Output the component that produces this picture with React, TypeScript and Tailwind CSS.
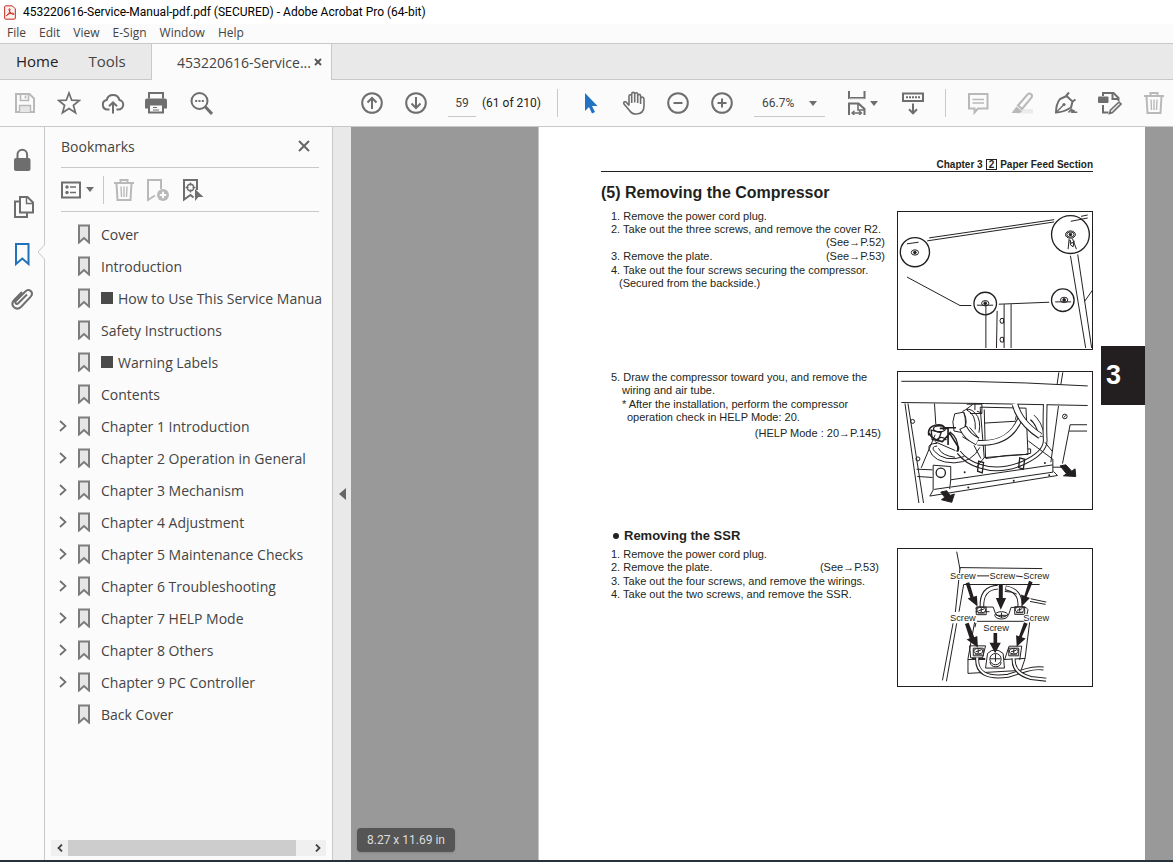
import type { ReactNode } from "react";

type IconProps = {
  children: ReactNode;
  className?: string;
};

function Icon({ children, className = "size-6 text-[#6e6e6e]" }: IconProps) {
  return (
    <svg
      viewBox="0 0 24 24"
      fill="none"
      stroke="currentColor"
      strokeWidth="2"
      className={className}
      aria-hidden="true"
    >
      {children}
    </svg>
  );
}

function ToolButton({ label, children }: { label: string; children: ReactNode }) {
  return (
    <button type="button" aria-label={label} className="flex h-11 w-11 shrink-0 items-center justify-center">
      {children}
    </button>
  );
}

function Caret() {
  return (
    <svg viewBox="0 0 8 5" className="h-[5px] w-2 text-[#6e6e6e]" aria-hidden="true">
      <path d="M0 0h8L4 5z" fill="currentColor" />
    </svg>
  );
}

function TrashIcon() {
  return (
    <Icon className="size-6 text-[#b9b9b9]">
      <path d="M2 5h20M8.500 4.500V2h7v2.500M4.500 5.500l1 16.500h13l1-16.500" />
      <path d="M9 8.500l.5 10.500M12 8.500V19M15 8.500L14.500 19" strokeWidth="1.4" />
    </Icon>
  );
}

const menus = ["File", "Edit", "View", "E-Sign", "Window", "Help"];

const bookmarks = [
  { title: "Cover" },
  { title: "Introduction" },
  { title: "How to Use This Service Manua", marked: true },
  { title: "Safety Instructions" },
  { title: "Warning Labels", marked: true },
  { title: "Contents" },
  { title: "Chapter 1 Introduction", expandable: true },
  { title: "Chapter 2 Operation in General", expandable: true },
  { title: "Chapter 3 Mechanism", expandable: true },
  { title: "Chapter 4 Adjustment", expandable: true },
  { title: "Chapter 5 Maintenance Checks", expandable: true },
  { title: "Chapter 6 Troubleshooting", expandable: true },
  { title: "Chapter 7 HELP Mode", expandable: true },
  { title: "Chapter 8 Others", expandable: true },
  { title: "Chapter 9 PC Controller", expandable: true },
  { title: "Back Cover" },
];

function TitleBar() {
  return (
    <header className="bg-white">
      <div className="flex h-6 items-center gap-[7px] pl-1 text-[12px] text-black">
        <svg viewBox="0 0 36 44" className="h-[15px] w-3 shrink-0" aria-hidden="true">
          <path d="M2 5q0-3 3-3h20l9 9v28q0 3-3 3H5q-3 0-3-3z" fill="#fdf1ef" stroke="#c5281c" strokeWidth="3" />
          <path
            d="M8 31c5-2 9-9 10-18 0-4-4-3-3 1 2 8 8 13 13 14 4 0 3-4-2-4-6 0-12 2-16 5-3 2-4 4-2 2z"
            fill="none"
            stroke="#c5281c"
            strokeWidth="3"
          />
        </svg>
        <h1 className="font-['Roboto',sans-serif]">
          453220616-Service-Manual-pdf.pdf (SECURED) - Adobe Acrobat Pro (64-bit)
        </h1>
      </div>
      <nav className="flex h-5 items-center gap-[13px] border-b border-[#c8c8c8] bg-[#fbfbfb] pb-[2px] pl-[7px] text-[12px] text-[#444]">
        {menus.map((menu) => (
          <button key={menu} type="button">
            {menu}
          </button>
        ))}
      </nav>
    </header>
  );
}

function TabBar() {
  return (
    <nav className="flex h-9 bg-[#e9e9e9] text-[14px] text-[#444]">
      <div className="flex w-[152px] items-center gap-[30px] border-r border-b border-[#c8c8c8] pl-4 text-[15px]">
        <button type="button" className="text-[#222]">
          Home
        </button>
        <button type="button">Tools</button>
      </div>
      <div className="flex w-[179px] items-center justify-between bg-[#fbfbfb] pr-[9px] pl-[25px]">
        <button type="button">453220616-Service...</button>
        <button type="button" aria-label="Close tab">
          <svg viewBox="0 0 8 8" className="size-2 text-[#555]" aria-hidden="true">
            <path d="M1 1l6 6M7 1L1 7" stroke="currentColor" strokeWidth="1.800" />
          </svg>
        </button>
      </div>
      <div className="flex-1 border-b border-l border-[#c8c8c8]" />
    </nav>
  );
}

function Toolbar() {
  return (
    <div className="flex h-[47px] items-center overflow-hidden border-b border-[#c8c8c8] bg-[#fbfbfb] pl-[3px]">
      <ToolButton label="Save">
        <Icon className="size-6 text-[#b9b9b9]">
          <path d="M3 3h13.500L21 7.500V21H3z" />
          <path d="M7.500 3v6.500h8V3M12.500 4.500v3" strokeWidth="1.6" />
          <path d="M6.500 21v-6.500h11V21" strokeWidth="1.4" fill="#e6e6e6" />
        </Icon>
      </ToolButton>
      <ToolButton label="Star">
        <Icon>
          <path d="M12 2l2.700 7.200 7.700.3-6 4.800 2.100 7.400-6.500-4.200-6.500 4.200 2.100-7.400-6-4.800 7.700-.3z" strokeWidth="1.700" />
        </Icon>
      </ToolButton>
      <ToolButton label="Upload">
        <Icon>
          <path d="M8.500 18.500H6.500a4.800 4.800 0 0 1-.8-9.500 6.500 6.500 0 0 1 12.700 0 4.800 4.800 0 0 1-.9 9.500h-2" />
          <path d="M12 22.500V11.500M8 15.300l4-4 4 4" />
        </Icon>
      </ToolButton>
      <ToolButton label="Print">
        <Icon>
          <path d="M4 7.500V2h14v5.500" />
          <path d="M2 7.500h18q2 0 2 2v8h-4v-3H4v3H0v-8q0-2 2-2z" fill="currentColor" stroke="none" />
          <path d="M4 13.500h14V21.500H4z" fill="#fbfbfb" />
          <path d="M8 16.500h4M8 19h6" strokeWidth="1.200" />
        </Icon>
      </ToolButton>
      <ToolButton label="Find">
        <Icon>
          <circle cx="10.500" cy="10" r="8" />
          <path d="M16 15.500l7 7.500" strokeWidth="3" />
          <path d="M6.200 10h2M9.500 10h2M12.800 10h2" />
        </Icon>
      </ToolButton>

      <div className="w-[127px] shrink-0" />
      <ToolButton label="Previous page">
        <Icon>
          <circle cx="12" cy="12" r="9.800" />
          <path d="M12 18V7M7.500 11.500L12 7l4.500 4.500" />
        </Icon>
      </ToolButton>
      <ToolButton label="Next page">
        <Icon>
          <circle cx="12" cy="12" r="9.800" />
          <path d="M12 6v11M7.500 12.500L12 17l4.500-4.500" />
        </Icon>
      </ToolButton>
      <input
        type="text"
        aria-label="Page number"
        defaultValue="59"
        className="ml-[10px] h-[27px] w-7 shrink-0 border-b border-[#c8c8c8] text-center font-['Roboto',sans-serif] text-[12px] text-[#444]"
      />
      <span className="ml-[6px] w-[55px] shrink-0 font-['Roboto',sans-serif] text-[12px] whitespace-nowrap text-[#222]">
        (61 of 210)
      </span>
      <div className="ml-5 h-7 w-px shrink-0 bg-[#c8c8c8]" />

      <div className="w-[10px] shrink-0" />
      <ToolButton label="Select">
        <Icon className="size-6 text-[#2272c3]">
          <path d="M7 2v18l4-4 3 6.500 3-1.400-3-6.100h5.500z" fill="currentColor" stroke="none" />
        </Icon>
      </ToolButton>
      <ToolButton label="Pan">
        <Icon>
          <path
            d="M7 14.500V5.200q0-1.500 1.300-1.500t1.400 1.500V12M9.700 6V2.900q0-1.500 1.500-1.500t1.500 1.500V11.500M12.700 3.300q0-1.600 1.500-1.600t1.500 1.600V12M15.700 4.800q0-1.400 1.400-1.400t1.500 1.400V13M18.600 7.500q0-1.400 1.600-1.400T22 8v7q0 8-8 8-4.300 0-6.500-3.500L2 13q-.8-1.600.6-2.200 1.200-.4 2.200 1l2.200 2.700"
            strokeWidth="1.600"
          />
        </Icon>
      </ToolButton>
      <ToolButton label="Zoom out">
        <Icon>
          <circle cx="12" cy="12" r="9.800" />
          <path d="M7.500 12h9" />
        </Icon>
      </ToolButton>
      <ToolButton label="Zoom in">
        <Icon>
          <circle cx="12" cy="12" r="9.800" />
          <path d="M7.500 12h9M12 7.500v9" />
        </Icon>
      </ToolButton>
      <div className="relative ml-[10px] w-[71px] shrink-0">
        <select
          aria-label="Zoom level"
          className="h-[27px] w-full appearance-none border-b border-[#c8c8c8] bg-transparent pl-2 font-['Roboto',sans-serif] text-[12px] text-[#444]"
        >
          <option>66.7%</option>
        </select>
        <div className="pointer-events-none absolute inset-y-0 right-2 flex items-center">
          <Caret />
        </div>
      </div>
      <button type="button" aria-label="Fit width" className="ml-[18px] flex h-11 w-[38px] shrink-0 items-center gap-[3px]">
        <Icon>
          <path d="M6 0v7h15.500V0M6 24V12.500h9.500l6 5.500v6" />
          <path d="M6 7.800h15.500" stroke="#c8c8c8" strokeWidth="1" />
          <path d="M15 13v6h6" strokeWidth="1.600" />
          <path d="M9.500 22h8.500M11.500 19.800L9 22l2.500 2.200M16 19.800l2.500 2.200-2.500 2.200" strokeWidth="1.300" />
        </Icon>
        <Caret />
      </button>
      <div className="w-[10px] shrink-0" />
      <ToolButton label="Page display">
        <Icon>
          <path d="M2 2.500h20v7.500H2z" />
          <path d="M5 6.300h14" strokeDasharray="2 1" />
          <path d="M12 12.500V22M8 18.300l4 4 4-4" />
        </Icon>
      </ToolButton>
      <div className="ml-[10px] h-7 w-px shrink-0 bg-[#c8c8c8]" />
      <div className="w-[10px] shrink-0" />
      <ToolButton label="Comment">
        <Icon className="size-6 text-[#b9b9b9]">
          <path d="M3 3h18.500v14.500H12L8.500 21.500v-4H3z" />
          <path d="M6.500 8.500H18M6.500 12H18" strokeWidth="1.300" />
        </Icon>
      </ToolButton>
      <ToolButton label="Highlight">
        <Icon className="size-6 text-[#b9b9b9]">
          <path d="M10 18h13v4.500H6z" fill="#ececec" stroke="none" />
          <path d="M8 14.500L17.500 3.500q1.800-1.800 3.700-.3 1.500 1.600.2 3.500L12 18z" />
          <path d="M6.500 15.500l5.500 5-2 1.500H1.500z" fill="currentColor" stroke="none" />
        </Icon>
      </ToolButton>
      <ToolButton label="Sign">
        <Icon>
          <path d="M2 21.500q0-8.500 4-13.500l6.500-3 6 5.500-1.500 6Q9 21.500 2 21.500z" />
          <path d="M2.500 21l7-7" strokeWidth="1.400" />
          <circle cx="10" cy="13.500" r="1.600" fill="currentColor" stroke="none" />
          <path d="M12 5l3-3.500M18.500 10.500l3-2" />
          <path d="M14.500 21.500q3-4 3.500-3t-1 3q2-2.500 2.800-2t-.5 1.800h4" strokeWidth="1.500" />
        </Icon>
      </ToolButton>
      <ToolButton label="Edit PDF">
        <Icon>
          <path d="M5 5V2h10.500L20.500 7v3M5 14v7.500h5.500" />
          <path d="M14.500 2v6H20" />
          <rect x="0" y="5.500" width="10.500" height="6.500" rx="1" fill="currentColor" stroke="none" />
          <path d="M12.500 19l8.500-8 2 2-8.500 8.500-3 1z" fill="#e6e6e6" strokeWidth="1.600" />
        </Icon>
      </ToolButton>
      <ToolButton label="Delete">
        <TrashIcon />
      </ToolButton>
    </div>
  );
}

function SideRail() {
  return (
    <nav className="relative flex w-[45px] shrink-0 flex-col border-r border-[#c8c8c8] bg-[#fbfbfb] pt-[9px]">
      <button type="button" aria-label="Security" className="flex h-[47px] items-center justify-center">
        <Icon>
          <path d="M7.500 11V6.500a4.800 4.800 0 0 1 9.600 0V11" />
          <rect x="4" y="10" width="16.500" height="13" rx="2" fill="currentColor" stroke="none" />
        </Icon>
      </button>
      <button type="button" aria-label="Page thumbnails" className="flex h-[47px] items-center justify-center">
        <Icon>
          <path d="M10 2h7.500L23 7.500v10H10z" />
          <path d="M16.500 2v6.500H23" strokeWidth="1.500" />
          <path d="M10 6.500H5V22h12v-4.500" />
        </Icon>
      </button>
      <button type="button" aria-label="Bookmarks" className="flex h-[47px] items-center justify-center">
        <Icon className="size-6 text-[#2272b9]">
          <path d="M6 2h12.500v20l-6.200-5.500L6 22z" />
        </Icon>
      </button>
      <button type="button" aria-label="Attachments" className="flex h-11 items-center justify-center">
        <Icon>
          <path
            d="M17 7.500L8.500 16q-1.500 1.500-2.700.4t.3-2.700l9-9q3-3 5.600-.6t0 5.600l-9.500 10q-3.800 3.500-7.200.5t.2-7.200L12 5"
            strokeWidth="2"
          />
        </Icon>
      </button>
      <svg viewBox="0 0 8 16" className="absolute top-[117px] -right-px h-4 w-2" aria-hidden="true">
        <path d="M8 0v16L1 8z" fill="#fbfbfb" />
        <path d="M7.500 0v1L1 8l6.500 7v1" fill="none" stroke="#c8c8c8" />
      </svg>
    </nav>
  );
}

function BookmarksPanel() {
  return (
    <aside className="flex w-72 shrink-0 flex-col border-r border-[#c8c8c8] bg-[#fbfbfb] text-[#444]">
      <div className="mr-[13px] ml-4 flex h-[41px] items-center justify-between border-b border-[#c8c8c8] pr-[9px] pb-[2px]">
        <h2 className="text-[14px]">Bookmarks</h2>
        <button type="button" aria-label="Close panel">
          <svg viewBox="0 0 12 12" className="size-3 text-[#666]" aria-hidden="true">
            <path d="M1 1l10 10M11 1L1 11" stroke="currentColor" strokeWidth="2" />
          </svg>
        </button>
      </div>
      <div className="mr-[13px] ml-4 flex h-11 items-center border-b border-[#c8c8c8]">
        <button type="button" aria-label="Options" className="flex w-[34px] items-center gap-[5px]">
          <svg viewBox="0 0 20 18" className="h-[18px] w-5 text-[#6e6e6e]" fill="none" stroke="currentColor" aria-hidden="true">
            <path d="M1 1.500h18v15H1z" strokeWidth="2" />
            <path d="M9 6h6M9 11.500h6" strokeWidth="1.500" />
            <circle cx="6" cy="6" r="1.700" fill="currentColor" stroke="none" />
            <circle cx="6" cy="11.500" r="1.700" fill="currentColor" stroke="none" />
          </svg>
          <Caret />
        </button>
        <div className="ml-2 h-7 w-px bg-[#c8c8c8]" />
        <div className="ml-2 flex gap-[10px]">
          <button type="button" aria-label="Delete bookmark">
            <TrashIcon />
          </button>
          <button type="button" aria-label="New bookmark">
            <Icon className="size-6 text-[#b9b9b9]">
              <path d="M9 17.500L2 22V2h13v9" />
              <circle cx="17" cy="17" r="6" fill="currentColor" stroke="none" />
              <path d="M17 13.800v6.400M13.800 17h6.400" stroke="#fbfbfb" />
            </Icon>
          </button>
          <button type="button" aria-label="Find bookmark">
            <Icon>
              <path d="M17 12V2H4v19.500l6.500-4.500 3 2.500" />
              <circle cx="10.500" cy="9.500" r="3.200" strokeWidth="1.400" />
              <path d="M10.500 4.500v3M10.500 11.500v3M5.500 9.500h3M12.500 9.500h3" strokeWidth="1.400" />
              <path d="M15 11v12l3.500-4h5z" fill="currentColor" stroke="none" />
            </Icon>
          </button>
        </div>
      </div>
      <ul className="mt-[6px] mr-[7px] flex-1 overflow-hidden text-[14px] whitespace-nowrap">
        {bookmarks.map((bookmark) => (
          <li key={bookmark.title} className="flex h-8 items-center pl-[14px]">
            <div className="flex w-[19px] shrink-0 items-center">
              {bookmark.expandable && (
                <button type="button" aria-label={`Expand ${bookmark.title}`}>
                  <svg viewBox="0 0 8 12" className="h-3 w-2 text-[#6e6e6e]" fill="none" aria-hidden="true">
                    <path d="M1 1l5.500 5L1 11" stroke="currentColor" strokeWidth="1.700" />
                  </svg>
                </button>
              )}
            </div>
            <svg viewBox="0 0 12 20" className="h-5 w-3 shrink-0" aria-hidden="true">
              <path d="M1 1.500h10v17L6 14l-5 4.500z" fill="#e6e6e6" stroke="#7d7d7d" strokeWidth="2" />
            </svg>
            <a href="#page" className="ml-[11px] flex items-center gap-[5px]">
              {bookmark.marked && <span className="size-3 bg-[#4a4a4a]" />}
              {bookmark.title}
            </a>
          </li>
        ))}
      </ul>
      <div className="mr-[6px] mb-1 ml-[6px] flex h-4 shrink-0 items-center bg-[#f0f0f0]">
        <button type="button" aria-label="Scroll left" className="flex w-[17px] justify-center">
          <svg viewBox="0 0 6 8" className="h-2 w-[6px]" fill="none" aria-hidden="true">
            <path d="M5 0.500L1.500 4 5 7.500" stroke="#444" strokeWidth="1.800" />
          </svg>
        </button>
        <div className="h-full w-[228px] bg-[#cdcdcd]" />
        <button type="button" aria-label="Scroll right" className="ml-auto flex w-[17px] justify-center">
          <svg viewBox="0 0 6 8" className="h-2 w-[6px]" fill="none" aria-hidden="true">
            <path d="M1 0.500L4.500 4 1 7.500" stroke="#444" strokeWidth="1.800" />
          </svg>
        </button>
      </div>
    </aside>
  );
}

function Figure({ label, viewBox, children }: { label: string; viewBox: string; children: ReactNode }) {
  return (
    <figure className="pt-px">
      <svg
        viewBox={viewBox}
        role="img"
        aria-label={label}
        fill="none"
        stroke="#231f20"
        strokeWidth="3"
        className="block h-[139px] w-full border border-[#231f20]"
      >
        {children}
      </svg>
    </figure>
  );
}

function CoverFigure() {
  return (
    <Figure label="Cover screws" viewBox="24 21 585 411">
      <path d="M118 98L495 43M112 107L495 50M51 116l35-5M51 216l160 86h34M328 298l152-6" />
      <path d="M289 300v130M323 318l-2 112M344 298v132M365 298v132M544 152l46 278M566 148l42 282M587 289l24-34" />
      <path d="M576 33l20-4M545 48l51-10" />
      <circle cx="75" cy="141" r="44" strokeWidth="4" />
      <circle cx="544" cy="88" r="57" strokeWidth="4" />
      <circle cx="287" cy="296" r="34" strokeWidth="4" />
      <circle cx="521" cy="286" r="34" strokeWidth="4" />
      <path d="M262 301h49M498 291h48" />
      {[
        [75, 142],
        [544, 88],
        [287, 295],
        [525, 285],
      ].map(([cx, cy]) => (
        <g key={cx}>
          <ellipse cx={cx} cy={cy} rx="11" ry="8" />
          <ellipse cx={cx} cy={cy} rx="4" ry="4" fill="#231f20" />
        </g>
      ))}
      <ellipse cx="544" cy="88" rx="15" ry="11" />
      <path d="M540 101l-3 31M550 100l12 32M543 104l1 15 8 6 3-18-7 8-6-10" />
      <path d="M334 341h8v14h-8q-5-7 0-14zM334 398h8v14h-8q-5-7 0-14z" />
    </Figure>
  );
}

function CompressorFigure() {
  return (
    <Figure label="Compressor removal" viewBox="24 96 585 411">
      <path d="M34 123h195l180 5 187 9M34 187l250 3 312 6M509 96l-5 35M521 96l-6 37" />
      <path d="M45 190l42 300M54 190l47 300M134 190l4 62M508 197l-23 170M520 371l23-117h51M540 273h54" />
      <circle cx="68" cy="244" r="6" />
      <circle cx="84" cy="357" r="6" />
      <circle cx="527" cy="229" r="7" />
      <path d="M524 232l6-6" />
      <path d="M272 205l12 148 132-10-6-139-138-3zM284 208l4 146M284 249l102-6M386 205l-8 34" />
      <path d="M231 192h46v28h-36M229 208l20-15M256 190v20M262 213l15 6" />
      <path d="M195 221l27-5q12 35-2 62l-27-5q-8-29 2-52zM222 216q16 30-2 62" />
      <path d="M218 214q20-15 38 4 20 20 12 60M232 210q28 12 25 58M222 276l24 25M240 262l24 28M218 290l20 12h30" />
      <path d="M264 308q96 8 128-72" strokeWidth="17" />
      <path d="M260 308q100 8 134-76" stroke="#fff" strokeWidth="11" />
      <path d="M220 262q12 28 44 42" strokeWidth="25" />
      <path d="M221 264q12 26 42 40" stroke="#fff" strokeWidth="19" />
      <path d="M428 232q22 16 29 58" strokeWidth="20" />
      <path d="M426 229q24 18 31 59" stroke="#fff" strokeWidth="14" />
      <path d="M377 193q15 55 76 95" strokeWidth="20" />
      <path d="M376 190q15 57 77 97" stroke="#fff" strokeWidth="14" />
      <path d="M468 193q-2 80 0 108 0 38-66 68-70 30-130 10-40-10-65-42" strokeWidth="14" />
      <path d="M468 190q-2 80 0 111 0 38-66 68-70 30-130 10-40-10-67-45" stroke="#fff" strokeWidth="8" />
      <path d="M183 420l308-45v22l-308 45M183 420V380l-53-4v75l-10 18 385-62-12-12M183 420l-3 28M133 449l48-7M491 375v-17l-74-55M467 307l22 27" />
      <path d="M80 388l48 2M82 410l46 3M94 384l42-100M284 353l-24 30M274 356l-21-40" />
      <circle cx="153" cy="399" r="14" strokeWidth="4" />
      <path d="M117 286q-6-30 31-32 20 1 12 15M118 280q10 20 40 25l22-25 26 41q2 14-6 12M150 265h25v50M165 263h34" strokeWidth="5" />
      <ellipse cx="149" cy="266" rx="18" ry="9" strokeWidth="4" />
      <path d="M124 270l30 8-9 24-18-4zM180 275q28 20 24 55M140 300q14-16 30 0" strokeWidth="4" />
      <path d="M142 310q-30 0-24 18 12 40 75 41 55-2 78-47M142 318q-20 2-8 16 30 35 90 16M146 325q10 22 50 27M135 305l62 27" />
      <path d="M267 364l15 4-4 31-14-5zM391 354l15 4-4 30-14-5z" strokeWidth="4" />
      <path d="M410 343l14-3v-13h-9M288 356q60-12 128-13" />
      {[
        [225, 397],
        [236, 443],
        [373, 423],
        [467, 369],
        [480, 406],
      ].map(([cx, cy]) => (
        <circle key={cx} cx={cx} cy={cy} r="3" fill="#231f20" stroke="none" />
      ))}
      <path d="M491 382h29" />
      <path d="M513 378l17-3 18 19 10-7 2 23-37-2 9-6zM153 457l18-4 10 14 13-4-8 25-31-8 10-7z" fill="#231f20" />
    </Figure>
  );
}

const screwLabels = [
  { x: 181, y: 116 },
  { x: 300, y: 116 },
  { x: 402, y: 116 },
  { x: 181, y: 242 },
  { x: 402, y: 242 },
  { x: 281, y: 272 },
];

function SsrFigure() {
  return (
    <Figure label="SSR screws" viewBox="24 27 585 411">
      <path d="M201 34l10 53M211 82l248 3M211 84l-14 132M190 250l-32 172M222 133l-14 82M201 250l-31 175M222 133h229" />
      <path d="M262 107h38M378 107l24 3" />
      <path d="M277 201q-2-58 48-60" strokeWidth="14" />
      <path d="M277 202q-2-59 50-61" stroke="#fff" strokeWidth="8" />
      <path d="M348 143q50 10 43 59" strokeWidth="15" />
      <path d="M350 143q48 11 41 60" stroke="#fff" strokeWidth="9" />
      <path d="M346 154q24 0 36 8M424 176l47 10M422 184l47 9" />
      <path d="M258 207l6-6h47l7 20q17 20 40 2l7-21h45l6 7-4 18M262 244h150M255 247l-20 110v44l160-9 12-35 14-110M256 262l3-13M247 356h40M235 359h52M345 359l62-3M240 318h48l-9 36h-36zM345 361l14-42h38l-6 42" />
      <ellipse cx="336" cy="226" rx="20" ry="11" />
      <path d="M336 218v16M320 226h32M258 215h42" />
      {[
        [275, 210],
        [391, 209],
        [266, 334],
        [373, 334],
      ].map(([x, y]) => (
        <g key={x}>
          <path d={`M${x - 15} ${y - 9}h30v23h-30z`} />
          <path d={`M${x - 11} ${y + 9}h22`} />
          <ellipse cx={x} cy={y} rx="13" ry="8" fill="#fff" />
          <path d={`M${x - 8} ${y + 2}l16-5M${x} ${y - 6}v12`} />
        </g>
      ))}
      <path d="M288 385l6-44q22-22 47 0l4 44z" fill="#fff" />
      <circle cx="318" cy="358" r="17" />
      <path d="M318 343v23M302 357h31M301 367q3 14 18 14t16-14" />
      <path d="M263 356q-5 65 93 52l55-17q25-8 52-5" strokeWidth="12" />
      <path d="M263 353q-5 68 93 55l55-17q25-8 54-5" stroke="#fff" strokeWidth="6" />
      <path d="M373 356q-4 44 52 59l46 5" strokeWidth="12" />
      <path d="M373 353q-4 47 52 62l49 5" stroke="#fff" strokeWidth="6" />
      <g fill="#231f20" stroke="none">
        <path d="M228 129l11-3 13 44 10-3 2 32-30-24 8-3z" />
        <path d="M328 132h12v42h10l-16 35-15-35h9z" />
        <path d="M419 122l11 4-18 44 10 4-24 24-3-35 10 4z" />
        <path d="M226 252l11-4 17 44 9-4 2 35-34-24 9-4z" />
        <path d="M312 279h11v30h11l-17 31-17-31h12z" />
        <path d="M404 247l11 4-18 41 12 4-27 25-2-35 9 3z" />
      </g>
      <g fill="#231f20" stroke="#fff" strokeWidth="6" paintOrder="stroke" fontSize="28" fontFamily="Liberation Sans, sans-serif">
        {screwLabels.map(({ x, y }) => (
          <text key={`${x}-${y}`} x={x} y={y}>
            Screw
          </text>
        ))}
      </g>
    </Figure>
  );
}

function ManualPage() {
  return (
    <main
      id="page"
      className="relative w-[607px] shrink-0 border-l border-[#c8c8c8] bg-white pr-[52px] pl-[62px] font-['Liberation_Sans',sans-serif] text-[11px] leading-[13px] text-[#231f20]"
    >
      <p className="mt-[30px] flex h-[15px] items-center justify-end gap-[3px] border-b border-[#231f20] text-[10px] font-bold">
        Chapter 3 <span className="border border-[#231f20] px-[2px] leading-[9px]">2</span> Paper Feed Section
      </p>
      <h2 className="mt-[11px] text-[16px] leading-5 font-bold">(5) Removing the Compressor</h2>

      <section className="mt-[7px] grid grid-cols-[1fr_196px] gap-x-3">
        <ol className="pl-[10px]">
          <li>1. Remove the power cord plug.</li>
          <li>
            <p className="whitespace-nowrap">2. Take out the three screws, and remove the cover R2.</p>
            <p className="text-right">(See→P.52)</p>
          </li>
          <li className="mt-px flex justify-between">
            <span>3. Remove the plate.</span>
            <span>(See→P.53)</span>
          </li>
          <li className="mt-px">
            <p>4. Take out the four screws securing the compressor.</p>
            <p className="pl-2">(Secured from the backside.)</p>
          </li>
        </ol>
        <CoverFigure />
      </section>

      <section className="mt-5 grid grid-cols-[1fr_196px] gap-x-3">
        <div className="pt-px pl-[10px]">
          <p>5. Draw the compressor toward you, and remove the</p>
          <p className="pl-[11px]">wiring and air tube.</p>
          <p className="mt-px pl-[11px]">* After the installation, perform the compressor</p>
          <p className="pl-4">operation check in HELP Mode: 20.</p>
          <p className="mt-[3px] pr-1 text-right">(HELP Mode : 20→P.145)</p>
        </div>
        <CompressorFigure />
      </section>

      <h3 className="mt-4 mb-px flex items-center gap-[5px] pl-3 text-[13px] leading-5 font-bold">
        <span className="size-[6px] rounded-full bg-[#231f20]" />
        Removing the SSR
      </h3>
      <section className="grid grid-cols-[1fr_196px] gap-x-3">
        <ol className="pt-px pl-[10px]">
          <li>1. Remove the power cord plug.</li>
          <li className="flex justify-between pr-[6px]">
            <span>2. Remove the plate.</span>
            <span>(See→P.53)</span>
          </li>
          <li className="mt-px">3. Take out the four screws, and remove the wirings.</li>
          <li>4. Take out the two screws, and remove the SSR.</li>
        </ol>
        <SsrFigure />
      </section>

      <div className="absolute top-[219px] right-0 flex h-[59px] w-11 items-center bg-[#231f20] pl-[5px] text-[27px] font-bold text-white">
        3
      </div>
    </main>
  );
}

export default function App() {
  return (
    <div className="flex h-screen flex-col overflow-hidden border-b-2 border-[#26323a] bg-[#fbfbfb] font-['Open_Sans','Noto_Sans',sans-serif]">
      <TitleBar />
      <TabBar />
      <Toolbar />
      <div className="flex min-h-0 flex-1">
        <SideRail />
        <BookmarksPanel />
        <div className="flex w-[18px] shrink-0 items-center justify-center bg-[#e9e9e9]">
          <button type="button" aria-label="Collapse panel">
            <svg viewBox="0 0 7 12" className="h-3 w-[7px]" aria-hidden="true">
              <path d="M7 0v12L0 6z" fill="#666" />
            </svg>
          </button>
        </div>
        <div className="relative flex min-w-0 flex-1 justify-end overflow-hidden bg-[#999] pr-7">
          <ManualPage />
          <div className="absolute bottom-2 left-[6px] rounded bg-[#555] px-[10px] py-1 font-['Roboto',sans-serif] text-[12px] leading-4 text-[#ddd] shadow">
            8.27 x 11.69 in
          </div>
        </div>
      </div>
    </div>
  );
}
